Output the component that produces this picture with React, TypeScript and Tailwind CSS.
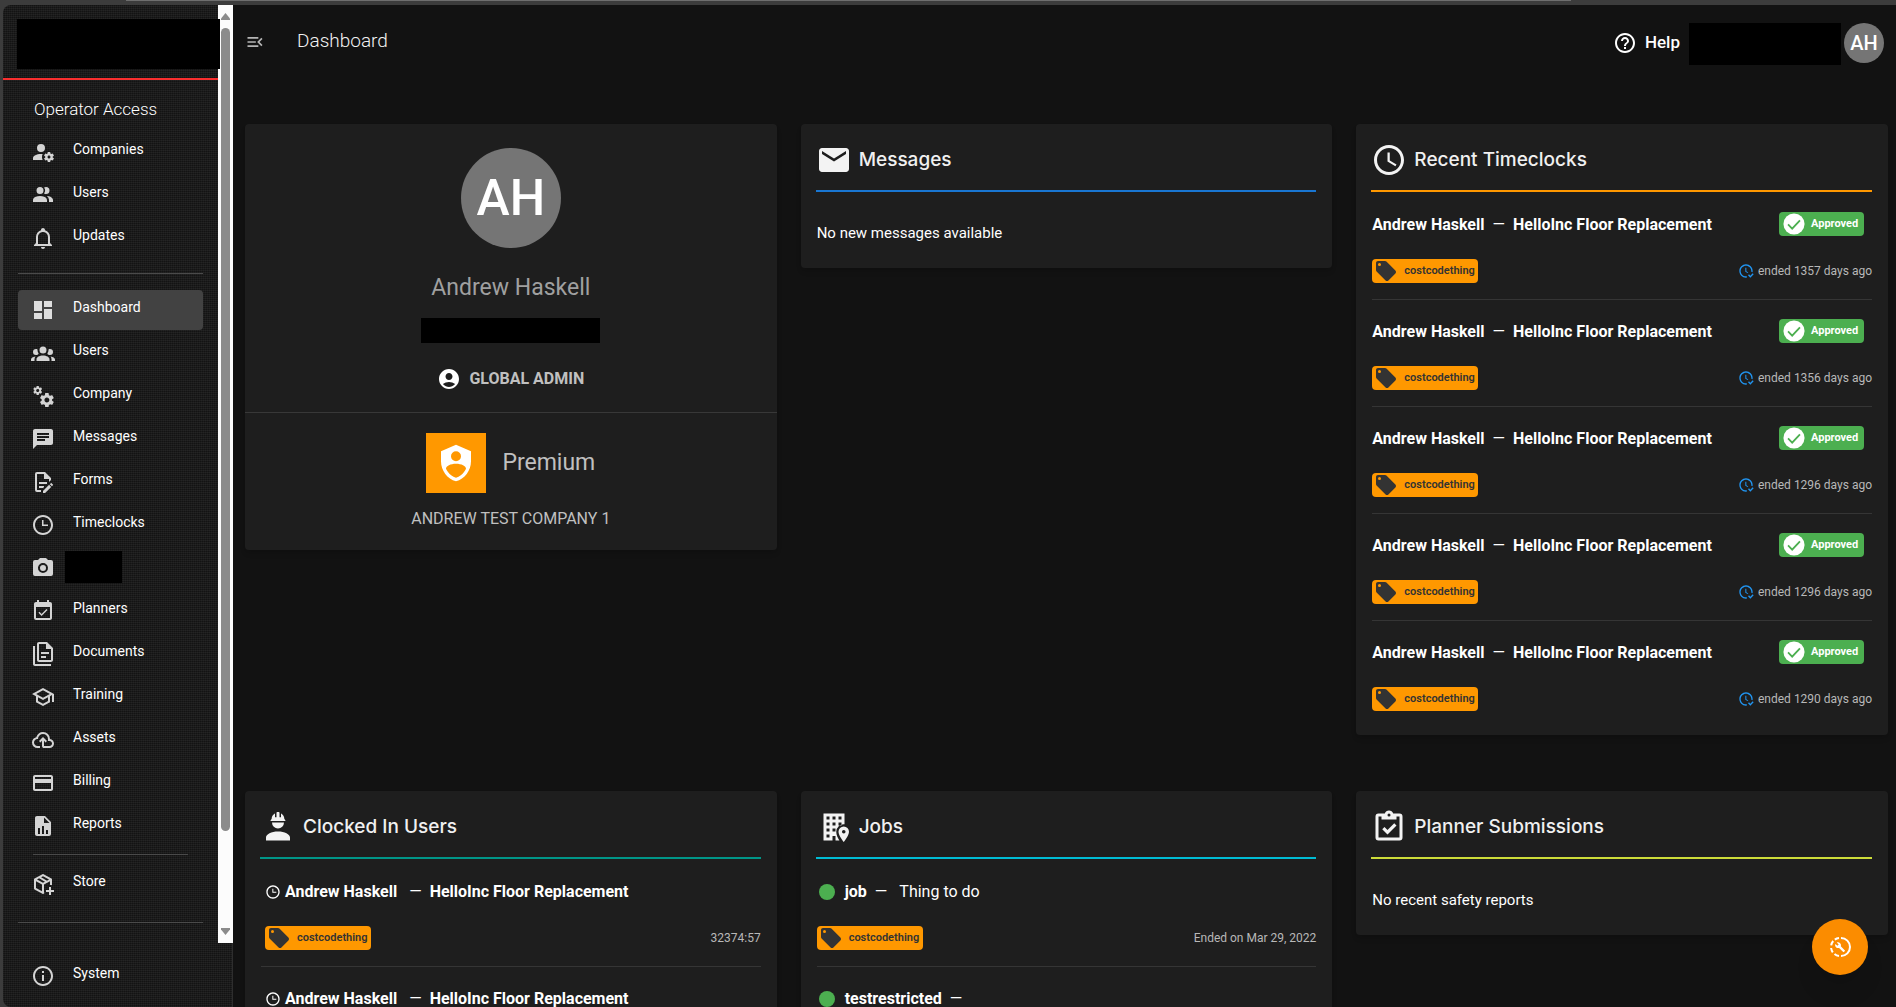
import React from "react";
import {
  MdAccessTime,
  MdAccountCircle,
  MdChat,
  MdEmail,
  MdEventAvailable,
  MdHelpOutline,
  MdInfoOutline,
  MdMenuOpen,
  MdPayment,
} from "react-icons/md";

const paths = {
  accountCog:
    "M10 4A4 4 0 0 0 6 8A4 4 0 0 0 10 12A4 4 0 0 0 14 8A4 4 0 0 0 10 4M17 12C16.87 12 16.76 12.09 16.74 12.21L16.55 13.53C16.25 13.66 15.96 13.82 15.7 14L14.46 13.5C14.35 13.5 14.22 13.5 14.15 13.63L13.15 15.36C13.09 15.47 13.11 15.6 13.21 15.68L14.27 16.5C14.25 16.67 14.24 16.83 14.24 17C14.24 17.17 14.25 17.33 14.27 17.5L13.21 18.32C13.12 18.4 13.09 18.53 13.15 18.64L14.15 20.37C14.21 20.5 14.34 20.5 14.46 20.5L15.7 20C15.96 20.18 16.24 20.35 16.55 20.47L16.74 21.79C16.76 21.91 16.86 22 17 22H19C19.11 22 19.22 21.91 19.24 21.79L19.43 20.47C19.73 20.34 20 20.18 20.27 20L21.5 20.5C21.63 20.5 21.76 20.5 21.83 20.37L22.83 18.64C22.89 18.53 22.86 18.4 22.77 18.32L21.7 17.5C21.72 17.33 21.74 17.17 21.74 17C21.74 16.83 21.73 16.67 21.7 16.5L22.76 15.68C22.85 15.6 22.88 15.47 22.82 15.36L21.82 13.63C21.76 13.5 21.63 13.5 21.5 13.5L20.27 14C20 13.82 19.73 13.65 19.42 13.53L19.23 12.21C19.22 12.09 19.11 12 19 12H17M10 14C5.58 14 2 15.79 2 18V20H11.68A7 7 0 0 1 11 17A7 7 0 0 1 11.64 14.09C11.11 14.03 10.56 14 10 14M18 15.5C18.83 15.5 19.5 16.17 19.5 17C19.5 17.83 18.83 18.5 18 18.5C17.16 18.5 16.5 17.83 16.5 17C16.5 16.17 17.17 15.5 18 15.5Z",
  accountMultiple:
    "M16 17V19H2V17S2 13 9 13 16 17 16 17M12.5 7.5A3.5 3.5 0 1 0 9 11A3.5 3.5 0 0 0 12.5 7.5M15.94 13A5.32 5.32 0 0 1 18 17V19H22V17S22 13.37 15.94 13M15 4A3.39 3.39 0 0 0 13.07 4.59A5 5 0 0 1 13.07 10.41A3.39 3.39 0 0 0 15 11A3.5 3.5 0 0 0 15 4Z",
  bell: "M10 21H14C14 22.1 13.1 23 12 23S10 22.1 10 21M21 19V20H3V19L5 17V11C5 7.9 7 5.2 10 4.3V4C10 2.9 10.9 2 12 2S14 2.9 14 4V4.3C17 5.2 19 7.9 19 11V17L21 19M17 11C17 8.2 14.8 6 12 6S7 8.2 7 11V18H17V11Z",
  dashboard: "M13,3V9H21V3M13,21H21V11H13M3,21H11V15H3M3,13H11V3H3V13Z",
  accountGroup:
    "M12,5.5A3.5,3.5 0 0,1 15.5,9A3.5,3.5 0 0,1 12,12.5A3.5,3.5 0 0,1 8.5,9A3.5,3.5 0 0,1 12,5.5M5,8C5.56,8 6.08,8.15 6.53,8.42C6.38,9.85 6.8,11.27 7.66,12.38C7.16,13.34 6.16,14 5,14A3,3 0 0,1 2,11A3,3 0 0,1 5,8M19,8A3,3 0 0,1 22,11A3,3 0 0,1 19,14C17.84,14 16.84,13.34 16.34,12.38C17.2,11.27 17.62,9.85 17.47,8.42C17.92,8.15 18.44,8 19,8M5.5,18.25C5.5,16.18 8.41,14.5 12,14.5C15.59,14.5 18.5,16.18 18.5,18.25V20H5.5V18.25M0,20V18.5C0,17.11 1.89,15.94 4.45,15.6C3.86,16.28 3.5,17.22 3.5,18.25V20H0M24,20H20.5V18.25C20.5,17.22 20.14,16.28 19.55,15.6C22.11,15.94 24,17.11 24,18.5V20Z",
  cogs: "M15.9,18.45C17.25,18.45 18.35,17.35 18.35,16C18.35,14.65 17.25,13.55 15.9,13.55C14.54,13.55 13.45,14.65 13.45,16C13.45,17.35 14.54,18.45 15.9,18.45M21.1,16.68L22.58,17.84C22.71,17.95 22.75,18.13 22.66,18.29L21.26,20.71C21.17,20.86 21,20.92 20.83,20.86L19.09,20.16C18.73,20.44 18.33,20.67 17.91,20.85L17.64,22.7C17.62,22.87 17.47,23 17.3,23H14.5C14.32,23 14.18,22.87 14.15,22.7L13.89,20.85C13.46,20.67 13.07,20.44 12.71,20.16L10.96,20.86C10.81,20.92 10.62,20.86 10.54,20.71L9.14,18.29C9.05,18.13 9.09,17.95 9.22,17.84L10.7,16.68L10.65,16L10.7,15.31L9.22,14.16C9.09,14.05 9.05,13.86 9.14,13.71L10.54,11.29C10.62,11.13 10.81,11.07 10.96,11.13L12.71,11.84C13.07,11.56 13.46,11.32 13.89,11.15L14.15,9.29C14.18,9.13 14.32,9 14.5,9H17.3C17.47,9 17.62,9.13 17.64,9.29L17.91,11.15C18.33,11.32 18.73,11.56 19.09,11.84L20.83,11.13C21,11.07 21.17,11.13 21.26,11.29L22.66,13.71C22.75,13.86 22.71,14.05 22.58,14.16L21.1,15.31L21.15,16L21.1,16.68M6.69,8.07C7.56,8.07 8.26,7.37 8.26,6.5C8.26,5.63 7.56,4.92 6.69,4.92A1.58,1.58 0 0,0 5.11,6.5C5.11,7.37 5.82,8.07 6.69,8.07M10.03,6.94L11,7.68C11.07,7.75 11.09,7.87 11.03,7.97L10.13,9.53C10.08,9.63 9.96,9.67 9.86,9.63L8.74,9.18L8,9.62L7.81,10.81C7.79,10.92 7.7,11 7.59,11H5.79C5.67,11 5.58,10.92 5.56,10.81L5.4,9.62L4.64,9.18L3.52,9.63C3.41,9.67 3.3,9.63 3.24,9.53L2.34,7.97C2.28,7.87 2.31,7.75 2.39,7.68L3.34,6.94L3.31,6.5L3.34,6.06L2.39,5.32C2.31,5.25 2.28,5.13 2.34,5.03L3.24,3.47C3.3,3.37 3.41,3.33 3.52,3.38L4.63,3.82L5.4,3.38L5.56,2.19C5.58,2.08 5.67,2 5.79,2H7.59C7.7,2 7.79,2.08 7.81,2.19L8,3.38L8.74,3.82L9.86,3.38C9.96,3.33 10.08,3.37 10.13,3.47L11.03,5.03C11.09,5.13 11.07,5.25 11,5.32L10.03,6.06L10.06,6.5L10.03,6.94Z",
  fileEdit:
    "M8,12H16V14H8V12M10,20H6V4H13V9H18V12.1L20,10.1V8L14,2H6A2,2 0 0,0 4,4V20A2,2 0 0,0 6,22H10V20M8,18H12.1L13,17.1V16H8V18M20.2,13C20.3,13 20.5,13.1 20.6,13.2L21.9,14.5C22.1,14.7 22.1,15.1 21.9,15.3L20.9,16.3L18.8,14.2L19.8,13.2C19.9,13.1 20,13 20.2,13M20.2,16.9L14.1,23H12V20.9L18.1,14.8L20.2,16.9Z",
  clockThree:
    "M12 20C16.4 20 20 16.4 20 12S16.4 4 12 4 4 7.6 4 12 7.6 20 12 20M12 2C17.5 2 22 6.5 22 12S17.5 22 12 22C6.5 22 2 17.5 2 12S6.5 2 12 2M17 11.5V13H11V7H12.5V11.5H17Z",
  camera:
    "M4,4H7L9,2H15L17,4H20A2,2 0 0,1 22,6V18A2,2 0 0,1 20,20H4A2,2 0 0,1 2,18V6A2,2 0 0,1 4,4M12,7A5,5 0 0,0 7,12A5,5 0 0,0 12,17A5,5 0 0,0 17,12A5,5 0 0,0 12,7M12,9A3,3 0 0,1 15,12A3,3 0 0,1 12,15A3,3 0 0,1 9,12A3,3 0 0,1 12,9Z",
  documents:
    "M16,0H8C6.9,0 6,0.9 6,2V18C6,19.1 6.9,20 8,20H20C21.1,20 22,19.1 22,18V6L16,0M20,18H8V2H15V7H20V18M4,4V22H20V24H4C2.9,24 2,23.1 2,22V4H4M10,10V12H18V10H10M10,14V16H15V14H10Z",
  school:
    "M12 3L1 9L5 11.18V17.18L12 21L19 17.18V11.18L21 10.09V17H23V9L12 3M18.82 9L12 12.72L5.18 9L12 5.28L18.82 9M17 16L12 18.72L7 16V12.27L12 15L17 12.27V16Z",
  cloudUpload:
    "M6.5 20Q4.22 20 2.61 18.43 1 16.85 1 14.58 1 12.63 2.17 11.1 3.35 9.57 5.25 9.15 5.88 6.85 7.75 5.43 9.63 4 12 4 14.93 4 16.96 6.04 19 8.07 19 11 20.73 11.2 21.86 12.5 23 13.78 23 15.5 23 17.38 21.69 18.69 20.38 20 18.5 20H13Q12.18 20 11.59 19.41 11 18.83 11 18V12.85L9.4 14.4L8 13L12 9L16 13L14.6 14.4L13 12.85V18H18.5Q19.55 18 20.27 17.27 21 16.55 21 15.5 21 14.45 20.27 13.73 19.55 13 18.5 13H17V11Q17 8.93 15.54 7.46 14.08 6 12 6 9.93 6 8.46 7.46 7 8.93 7 11H6.5Q5.05 11 4.03 12.03 3 13.05 3 14.5 3 15.95 4.03 17 5.05 18 6.5 18H9V20Z",
  fileChart:
    "M13,9H18.5L13,3.5V9M6,2H14L20,8V20A2,2 0 0,1 18,22H6C4.89,22 4,21.1 4,20V4C4,2.89 4.89,2 6,2M7,20H9V14H7V20M11,20H13V12H11V20M15,20H17V16H15V20Z",
  packagePlus:
    "M13 19.31V12.6L19 9.21V13C19.7 13 20.37 13.13 21 13.35V7.5C21 7.12 20.79 6.79 20.47 6.62L12.57 2.18C12.41 2.06 12.21 2 12 2S11.59 2.06 11.43 2.18L3.53 6.62C3.21 6.79 3 7.12 3 7.5V16.5C3 16.88 3.21 17.21 3.53 17.38L11.43 21.82C11.59 21.94 11.79 22 12 22S12.41 21.94 12.57 21.82L13.38 21.37C13.13 20.72 13 20 13 19.31M12 4.15L18 7.5L16 8.65L10.11 5.22L12 4.15M6.04 7.5L8.08 6.35L13.96 9.79L12 10.85L6.04 7.5M5 15.91V9.21L11 12.58V19.29L5 15.91M20 15V18H23V20H20V23H18V20H15V18H18V15H20Z",
  hardHat:
    "M12,15C7.58,15 4,16.79 4,19V21H20V19C20,16.79 16.42,15 12,15M8,9A4,4 0 0,0 12,13A4,4 0 0,0 16,9M11.5,2C11.2,2 11,2.21 11,2.5V5.5H10V3C10,3 7.75,3.86 7.75,6.75C7.75,6.75 7,6.89 7,8H17C16.95,6.89 16.25,6.75 16.25,6.75C16.25,3.86 14,3 14,3V5.5H13V2.5C13,2.21 12.81,2 12.5,2H11.5Z",
  buildingMarker:
    "M5 3H19V10.200A5 5 0 0 0 13.500 15.200C13.500 17.400 14.600 19.500 15.600 21H13V18H11V21H5V3M7 5V7H9V5H7M11 5V7H13V5H11M15 5V7H17V5H15M7 9V11H9V9H7M11 9V11H13V9H11M15 9V11H17V9H15M7 13V15H9V13H7M11 13V15H13V13H11M7 17V19H9V17H7M18.500 11.700A3.500 3.500 0 0 1 22 15.200C22 17.800 18.500 22 18.500 22S15 17.800 15 15.200A3.500 3.500 0 0 1 18.500 11.700M18.500 14A1.200 1.200 0 0 0 18.500 16.400A1.200 1.200 0 0 0 18.500 14Z",
  clipboardCheck:
    "M19,3H14.82C14.4,1.84 13.3,1 12,1C10.7,1 9.6,1.84 9.18,3H5A2,2 0 0,0 3,5V19A2,2 0 0,0 5,21H19A2,2 0 0,0 21,19V5A2,2 0 0,0 19,3M12,3A1,1 0 0,1 13,4A1,1 0 0,1 12,5A1,1 0 0,1 11,4A1,1 0 0,1 12,3M7,7H17V5H19V19H5V5H7V7M7.5,13.5L9,12L11,14L15.5,9.5L17,11L11,17L7.5,13.5Z",
  tag: "M5.5,7A1.5,1.5 0 0,1 4,5.5A1.5,1.5 0 0,1 5.5,4A1.5,1.5 0 0,1 7,5.5A1.5,1.5 0 0,1 5.5,7M21.41,11.58L12.41,2.58C12.05,2.22 11.55,2 11,2H4C2.89,2 2,2.89 2,4V11C2,11.55 2.22,12.05 2.59,12.41L11.58,21.41C11.95,21.77 12.45,22 13,22C13.55,22 14.05,21.77 14.41,21.41L21.41,14.41C21.78,14.05 22,13.55 22,13C22,12.44 21.77,11.94 21.41,11.58Z",
  clockCheck:
    "M23.5 17L18.5 22L15 18.5L16.5 17L18.5 19L22 15.5L23.5 17M13.1 19.9C12.7 20 12.4 20 12 20C7.6 20 4 16.4 4 12S7.6 4 12 4 20 7.6 20 12C20 12.4 20 12.7 19.9 13.1C20.6 13.2 21.2 13.4 21.8 13.7C21.9 13.1 22 12.6 22 12C22 6.5 17.5 2 12 2S2 6.5 2 12C2 17.5 6.5 22 12 22C12.6 22 13.2 21.9 13.7 21.8C13.4 21.3 13.2 20.7 13.1 19.9M15.6 14.1L12.5 12.3V7H11V13L14.5 15.1C14.8 14.7 15.2 14.4 15.6 14.1Z",
  shieldAccount:
    "M12,1L3,5V11C3,16.55 6.84,21.74 12,23C17.16,21.74 21,16.55 21,11V5L12,1M12,5A3,3 0 0,1 15,8A3,3 0 0,1 12,11A3,3 0 0,1 9,8A3,3 0 0,1 12,5M17.13,17C15.92,18.85 14.11,20.24 12,20.92C9.89,20.24 8.08,18.85 6.87,17C6.53,16.5 6.24,16 6,15.47C6,13.82 8.71,12.47 12,12.47C15.29,12.47 18,13.79 18,15.47C17.76,16 17.47,16.5 17.13,17Z",
};

function Icon({ name, className }: { name: keyof typeof paths; className?: string }) {
  return (
    <svg viewBox="0 0 24 24" fill="currentColor" fillRule="evenodd" aria-hidden="true" className={className}>
      <path d={paths[name]} />
    </svg>
  );
}

const navIcon = "size-6 shrink-0";

function NavItem({
  icon,
  label,
  active,
}: {
  icon: React.ReactNode;
  label?: string;
  active?: boolean;
}) {
  return (
    <a
      href="#"
      className={
        active
          ? "flex h-10 items-center rounded bg-[#424242] pl-[13px] text-[#dedede]"
          : "flex h-10 items-center rounded pl-[13px] text-[#d4d4d4]"
      }
    >
      {icon}
      {label ? (
        <span className="pb-1.5 pl-[18px] text-sm leading-5 text-white">{label}</span>
      ) : (
        <span className="mb-0.5 ml-[10px] h-8 w-[57px] bg-black" />
      )}
    </a>
  );
}

const operatorNav = [
  { label: "Companies", icon: <Icon name="accountCog" className={navIcon} /> },
  { label: "Users", icon: <Icon name="accountMultiple" className={navIcon} /> },
  { label: "Updates", icon: <Icon name="bell" className={navIcon} /> },
];

const mainNav = [
  { label: "Dashboard", icon: <Icon name="dashboard" className={navIcon} />, active: true },
  { label: "Users", icon: <Icon name="accountGroup" className={navIcon} /> },
  { label: "Company", icon: <Icon name="cogs" className={navIcon} /> },
  { label: "Messages", icon: <MdChat className={navIcon} /> },
  { label: "Forms", icon: <Icon name="fileEdit" className={navIcon} /> },
  { label: "Timeclocks", icon: <Icon name="clockThree" className={navIcon} /> },
  { label: "", icon: <Icon name="camera" className={navIcon} /> },
  { label: "Planners", icon: <MdEventAvailable className={navIcon} /> },
  { label: "Documents", icon: <Icon name="documents" className={navIcon} /> },
  { label: "Training", icon: <Icon name="school" className={navIcon} /> },
  { label: "Assets", icon: <Icon name="cloudUpload" className={navIcon} /> },
  { label: "Billing", icon: <MdPayment className={navIcon} /> },
  { label: "Reports", icon: <Icon name="fileChart" className={navIcon} /> },
];

function Sidebar() {
  return (
    <aside className="flex w-[230px] shrink-0 flex-col rounded-l-lg border-r border-[#2e2e2e] bg-[#131313] bg-[repeating-linear-gradient(0deg,rgba(255,255,255,0.045)_0px,rgba(255,255,255,0.045)_1px,transparent_1px,transparent_2px),repeating-linear-gradient(90deg,rgba(255,255,255,0.03)_0px,rgba(255,255,255,0.03)_1px,transparent_1px,transparent_2px)]">
      <div className="-mr-px flex min-h-0 flex-1">
        <div className="min-w-0 flex-1">
          <div className="border-b-2 border-[#f92f2f] pt-[14px] pb-[9px] pl-[14px]">
            <div className="relative z-10 -mr-0.5 h-[50px] bg-black" />
          </div>
          <nav className="px-[15px]">
            <h2 className="pt-[17px] pb-[11px] pl-4 text-[17px] leading-6 font-light text-white">Operator Access</h2>
            <div className="flex flex-col gap-[3px]">
              {operatorNav.map((item) => (
                <NavItem key={item.label} {...item} />
              ))}
            </div>
            <hr className="mt-[15px] mb-4 border-[#4a4a4a]" />
            <div className="flex flex-col gap-[3px]">
              {mainNav.map((item, i) => (
                <NavItem key={i} {...item} />
              ))}
            </div>
            <hr className="mx-[15px] mt-2 mb-[9px] border-[#4a4a4a]" />
            <NavItem label="Store" icon={<Icon name="packagePlus" className={navIcon} />} />
            <hr className="mt-[18px] border-[#4a4a4a]" />
          </nav>
        </div>
        <div className="flex w-[15px] flex-col items-center bg-[#fcfcfc] pt-2 pb-2">
          <svg viewBox="0 0 9 7" className="h-[7px] w-[9px]" fill="#8b8b8b" aria-hidden="true">
            <path d="M4.500 0 9 5.500V7H0V5.500Z" />
          </svg>
          <div className="mt-2 h-[803px] w-[9px] rounded-full bg-[#8b8b8b]" />
          <svg viewBox="0 0 9 7" className="mt-auto h-[7px] w-[9px]" fill="#8b8b8b" aria-hidden="true">
            <path d="M4.500 7 0 1.500V0H9V1.500Z" />
          </svg>
        </div>
      </div>
      <div className="px-[15px] pt-[13px] pb-[11px]">
        <NavItem label="System" icon={<MdInfoOutline className={navIcon} />} />
      </div>
    </aside>
  );
}

function CostChip() {
  return (
    <span className="flex h-6 w-[106px] items-center rounded bg-[#ff9800] pl-0.5 text-[11px] font-semibold text-[#333]">
      <Icon name="tag" className="size-6" />
      <span className="pl-1.5">costcodething</span>
    </span>
  );
}

function ApprovedChip() {
  return (
    <span className="mr-2 mb-0.5 flex h-6 w-[85px] items-center rounded bg-[#4caf50] pl-1 text-[11px] font-bold text-white">
      <svg viewBox="0 0 24 24" className="size-[22px]" aria-hidden="true">
        <circle cx="12" cy="12" r="11.500" fill="white" />
        <path d="M5.500 12.500 10 17 18.500 8" fill="none" stroke="#4caf50" strokeWidth="2" />
      </svg>
      <span className="pl-1.5">Approved</span>
    </span>
  );
}

function Card({
  title,
  icon,
  line,
  children,
}: {
  title: string;
  icon: React.ReactNode;
  line: string;
  children: React.ReactNode;
}) {
  return (
    <section className="self-start rounded bg-[#1e1e1e] px-4 pb-[7px] shadow-md">
      <div className={"-ml-px flex h-[68px] items-center border-b-2 pt-1.5 " + line}>
        {icon}
        <h2 className="pl-[7px] font-['Inter'] text-[19px] leading-6 font-medium text-[#f0f0f0]">{title}</h2>
      </div>
      {children}
    </section>
  );
}

function Entry({
  children,
  right,
  meta,
  indent,
}: {
  children: React.ReactNode;
  right?: React.ReactNode;
  meta: React.ReactNode;
  indent?: boolean;
}) {
  return (
    <li className="flex h-[107px] flex-col border-b border-[#353535] last:border-transparent">
      <div className={"flex h-16 items-center justify-between " + (indent ? "pl-1" : "")}>
        <div className="flex items-center text-base leading-6 text-white">{children}</div>
        {right}
      </div>
      <div className={"flex h-7 items-center justify-between text-xs text-[#b8b8b8] " + (indent ? "pl-1" : "")}>
        <CostChip />
        <div className="flex items-center gap-1">{meta}</div>
      </div>
    </li>
  );
}

const timeclocks = [1357, 1356, 1296, 1296, 1290];
const headIcon = "size-9 shrink-0 text-[#f3f3f3]";

export default function App() {
  return (
    <div className="flex h-screen flex-col overflow-hidden bg-[#3c3c3c] font-['Roboto',sans-serif]">
      <div className="h-[5px] shrink-0 pr-[325px] pl-[126px]">
        <div className="h-px bg-[#6e6e6e]" />
      </div>
      <div className="flex min-h-0 flex-1 pl-[3px]">
        <Sidebar />
        <main className="min-w-0 flex-1 overflow-hidden bg-[#121212] pr-2 pl-3">
          <header className="flex h-[119px] items-start pt-[18px]">
            <button aria-label="Collapse menu" className="mt-[9px] text-[#b5b5b5]">
              <MdMenuOpen className="size-5" />
            </button>
            <h1 className="mt-1.5 pl-8 text-[19px] leading-6 font-light text-[#f2f2f2]">Dashboard</h1>
            <div className="ml-auto flex h-10 items-center pr-1">
              <a href="#" className="flex items-center text-white">
                <MdHelpOutline className="size-6" />
                <span className="pl-2 text-[17px] font-medium">Help</span>
              </a>
              <div className="mt-0.5 ml-[9px] h-[42px] w-[152px] bg-black" />
              <button className="ml-[3px] size-10 rounded-full bg-[#757575] text-xl font-medium text-white">AH</button>
            </div>
          </header>

          <div className="grid grid-cols-3 gap-x-6 gap-y-14">
            <section className="flex flex-col items-center self-start rounded bg-[#1e1e1e] pt-6 shadow-md">
              <div className="flex size-[100px] items-center justify-center rounded-full bg-[#757575] text-[50px] font-medium text-white">
                AH
              </div>
              <p className="mt-6 text-[23px] leading-8 text-[#a0a0a0]">Andrew Haskell</p>
              <div className="mt-[14px] h-[25px] w-[179px] bg-black" />
              <p className="mt-6 mb-[21px] flex items-center gap-2 text-base leading-6 font-bold text-[#c0c0c0]">
                <MdAccountCircle className="size-6 text-white" />
                GLOBAL ADMIN
              </p>
              <div className="flex w-full flex-col items-center border-t border-[#383838] pt-5">
                <div className="flex items-center gap-4 text-[23px] text-[#c0c0c0]">
                  <div className="flex size-[60px] items-center justify-center bg-[#ff9800]">
                    <Icon name="shieldAccount" className="size-10 text-white" />
                  </div>
                  Premium
                </div>
                <p className="mt-[14px] mb-[19px] text-base leading-6 text-[#c0c0c0]">ANDREW TEST COMPANY 1</p>
              </div>
            </section>

            <Card title="Messages" line="border-[#1976d2]" icon={<MdEmail className={headIcon} />}>
              <p className="pt-[27px] pb-[14px] text-[15px] leading-7 text-white">No new messages available</p>
            </Card>

            <Card title="Recent Timeclocks" line="border-[#ff9800]" icon={<MdAccessTime className={headIcon} />}>
              <ul className="pt-px">
                {timeclocks.map((days, i) => (
                  <Entry
                    key={i}
                    right={<ApprovedChip />}
                    meta={
                      <>
                        <Icon name="clockCheck" className="size-4 text-[#2196f3]" />
                        ended {days} days ago
                      </>
                    }
                  >
                    <b>Andrew Haskell</b>
                    <span className="px-2">—</span>
                    <b>HelloInc Floor Replacement</b>
                  </Entry>
                ))}
              </ul>
            </Card>

            <Card title="Clocked In Users" line="border-[#009688]" icon={<Icon name="hardHat" className={headIcon} />}>
              <ul className="pt-px">
                {[0, 1].map((i) => (
                  <Entry key={i} indent meta="32374:57">
                    <Icon name="clockThree" className="size-4" />
                    <b className="pl-1">Andrew Haskell</b>
                    <span className="pr-2 pl-3">—</span>
                    <b>HelloInc Floor Replacement</b>
                  </Entry>
                ))}
              </ul>
            </Card>

            <Card title="Jobs" line="border-[#00bcd4]" icon={<Icon name="buildingMarker" className={headIcon} />}>
              <ul className="pt-px">
                <Entry meta="Ended on Mar 29, 2022">
                  <span className="mx-0.5 size-4 rounded-full bg-[#4caf50]" />
                  <b className="pl-2">job</b>
                  <span className="px-2">—</span>
                  <span className="pl-1">Thing to do</span>
                </Entry>
                <Entry meta="Ended on Mar 29, 2022">
                  <span className="mx-0.5 size-4 rounded-full bg-[#4caf50]" />
                  <b className="pl-2">testrestricted</b>
                  <span className="px-2">—</span>
                </Entry>
              </ul>
            </Card>

            <Card title="Planner Submissions" line="border-[#cddc39]" icon={<Icon name="clipboardCheck" className={headIcon} />}>
              <p className="pt-[27px] pb-[14px] text-[15px] leading-7 text-white">No recent safety reports</p>
            </Card>
          </div>
        </main>
      </div>

      <button
        aria-label="Tools"
        className="fixed right-7 bottom-8 flex size-14 items-center justify-center rounded-full bg-[#fb8c00] text-white shadow-xl"
      >
        <svg viewBox="0 0 24 24" className="size-6" fill="none" stroke="currentColor" strokeWidth="2" aria-hidden="true">
          <path d="M13 3a9 9 0 0 1 0 18" />
          <path d="M11 3a9 9 0 0 0-4.200 1.600M5.200 6a9 9 0 0 0-2 4.400M3.100 13a9 9 0 0 0 1.700 4.300M6.500 19a9 9 0 0 0 4.500 2" />
          <path
            d="m16.900 15.400-4.100-4.100c.4-1 .2-2.300-.7-3.100-.9-.9-2.200-1.100-3.300-.6l1.900 1.900-1.300 1.300-2-1.900c-.5 1.100-.3 2.400.6 3.300.9.9 2.100 1.100 3.100.7l4.100 4.100c.2.200.5.200.7 0l1-1c.2-.2.200-.5 0-.6z"
            fill="currentColor"
            stroke="none"
          />
        </svg>
      </button>
    </div>
  );
}
